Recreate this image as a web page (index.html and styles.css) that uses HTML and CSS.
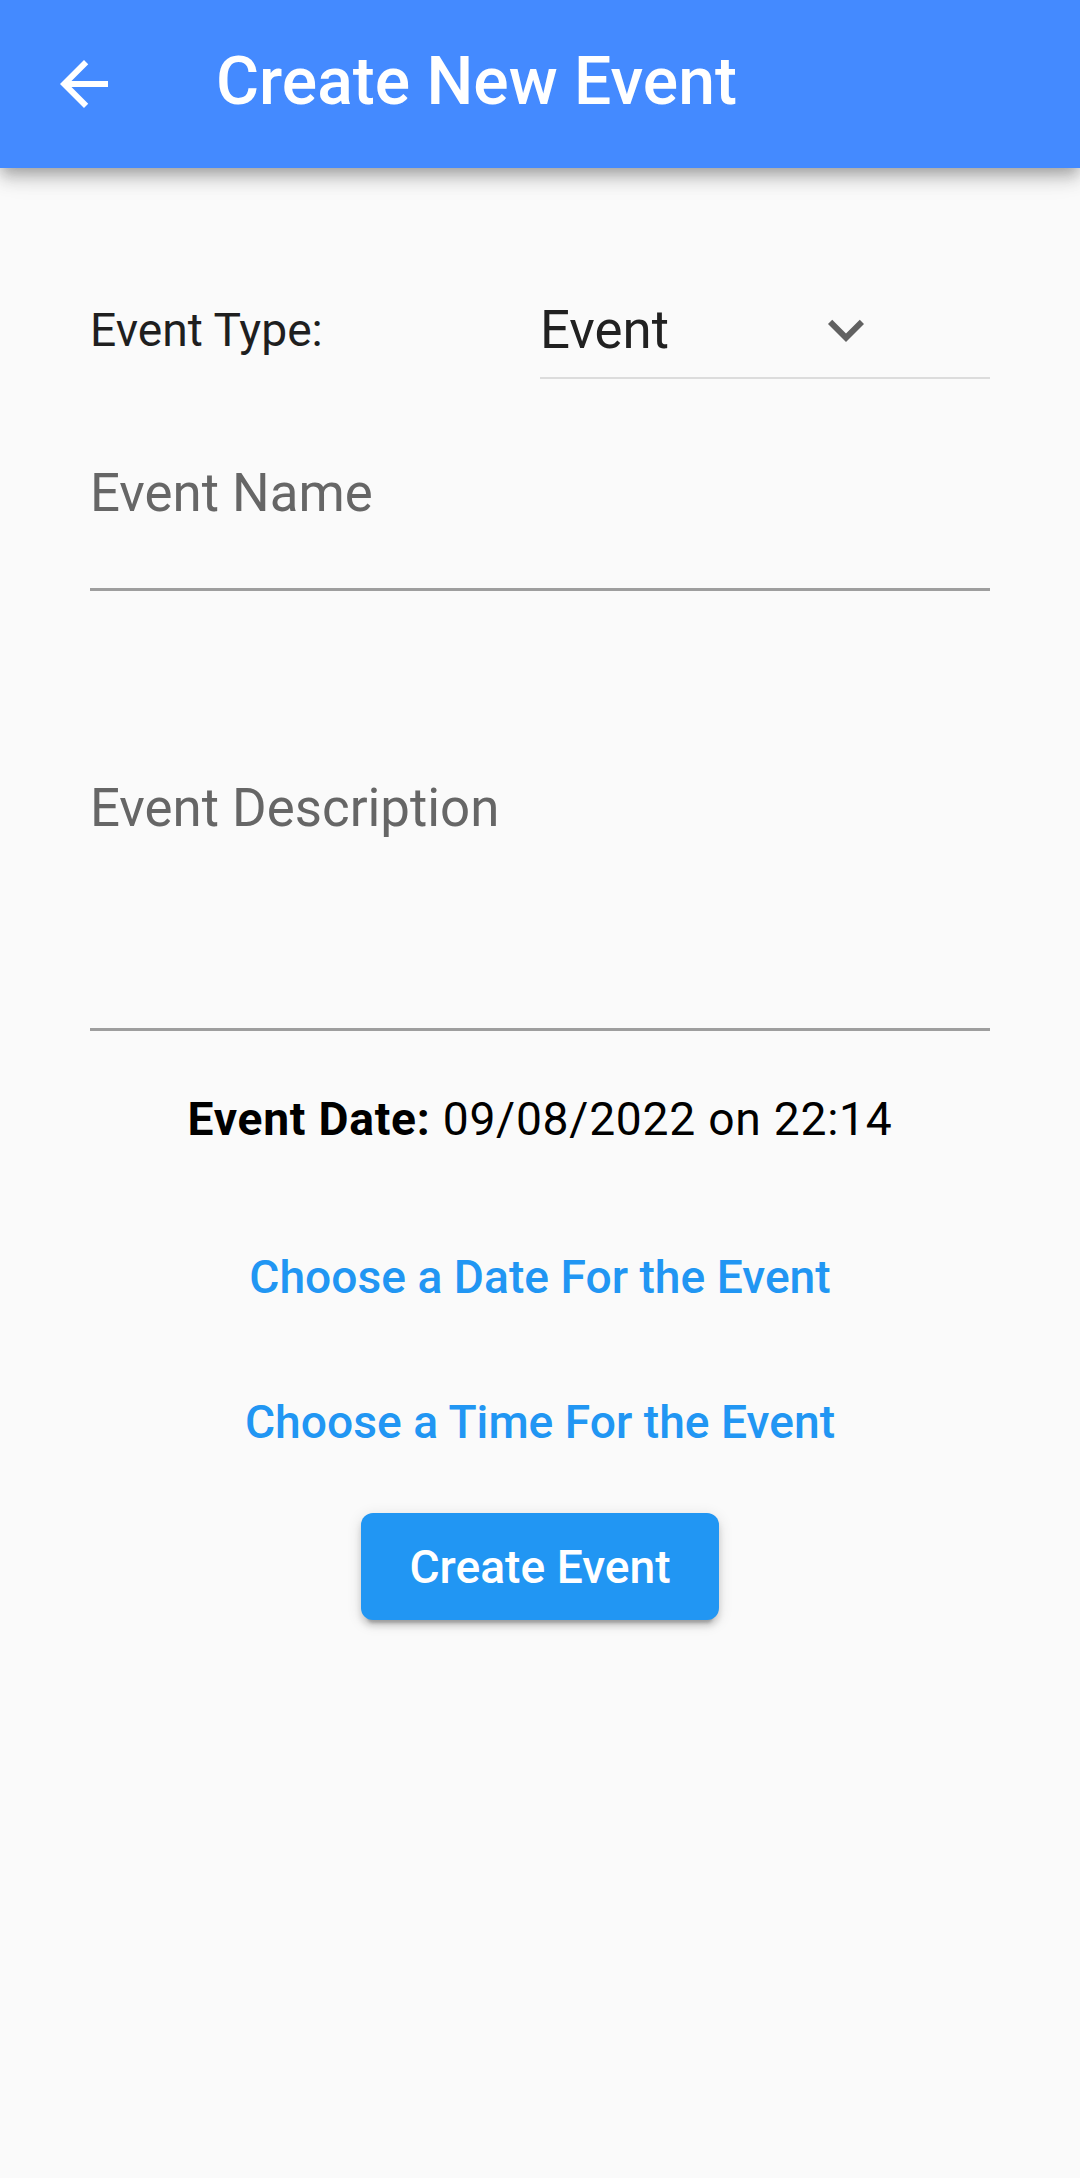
FILE: index.html
```html
<!DOCTYPE html>
<html lang="en">
<head>
<meta charset="utf-8">
<title>Create New Event</title>
<link rel="stylesheet" href="styles.css">
</head>
<body>
<header class="appbar">
  <button class="back" aria-label="Back">
    <svg viewBox="0 0 24 24" width="72" height="72"><path fill="#fff" d="M20 11H7.830l5.59-5.59L12 4l-8 8 8 8 1.41-1.410L7.83 13H20v-2z"/></svg>
  </button>
  <h1 class="title">Create New Event</h1>
</header>
<main class="form">
  <div class="type-row">
    <span class="type-label">Event Type:</span>
    <div class="dropdown">
      <span class="dd-value">Event</span>
      <svg class="dd-icon" viewBox="0 0 24 24" width="72" height="72"><path fill="#616161" d="M16.59 8.59L12 13.17 7.41 8.59 6 10l6 6 6-6z"/></svg>
    </div>
  </div>
  <div class="field field-name"><span class="hint">Event Name</span></div>
  <div class="field field-desc"><span class="hint">Event Description</span></div>
  <p class="date-line"><b>Event Date:</b> 09/08/2022 on 22:14</p>
  <button class="text-btn text-btn-date">Choose a Date For the Event</button>
  <button class="text-btn text-btn-time">Choose a Time For the Event</button>
  <button class="raised-btn">Create Event</button>
</main>
</body>
</html>
```

FILE: styles.css
```css
* { box-sizing: border-box; }
html, body {
  margin: 0;
  padding: 0;
  background: #fafafa;
  font-family: Roboto, "Noto Sans", "Liberation Sans", sans-serif;
}
body { min-height: 2178px; }

.appbar {
  height: 168px;
  background: #448aff;
  display: flex;
  align-items: center;
  box-shadow: 0 6px 12px -3px rgba(0,0,0,.2), 0 12px 15px 0 rgba(0,0,0,.14), 0 3px 30px 0 rgba(0,0,0,.12);
  position: relative;
  z-index: 1;
}
.back {
  margin-left: 48px;
  width: 72px;
  height: 72px;
  padding: 0;
  border: none;
  background: none;
  display: block;
}
.back svg { display: block; }
.title {
  margin: 0 0 0 96px;
  font-size: 66px;
  font-weight: 500;
  color: #fff;
  line-height: 72px;
  position: relative;
  top: -2px;
}

.form {
  display: flex;
  flex-direction: column;
  padding: 126px 90px 0;
}

.type-row {
  display: flex;
  align-items: flex-start;
}
.type-label {
  flex: 1;
  font-size: 46.2px;
  line-height: 72px;
  color: #1f1f1f;
}
.dropdown {
  flex: 1;
  display: flex;
  align-items: center;
  padding-bottom: 11px;
  border-bottom: 2px solid #dcdcdc;
}
.dd-value {
  width: 270px;
  font-size: 52.8px;
  line-height: 72px;
  color: #212121;
}
.dd-icon { display: block; }

.field {
  border-bottom: 3px solid #9e9e9e;
}
.hint {
  display: block;
  font-size: 52.8px;
  line-height: 72px;
  color: #666;
}
.field-name {
  margin-top: 78px;
  padding-bottom: 59px;
}
.field-desc {
  margin-top: 181px;
  padding-bottom: 184px;
}

.date-line {
  margin: 52px 0 0;
  text-align: center;
  font-size: 46.2px;
  line-height: 72px;
  letter-spacing: 0.75px;
  color: #000;
}
.date-line b { font-weight: 700; }

.text-btn {
  align-self: center;
  height: 144px;
  padding: 0 24px;
  border: none;
  background: none;
  font-family: inherit;
  font-size: 46.2px;
  font-weight: 500;
  color: #2196f3;
}
.text-btn-date { margin-top: 50px; }
.text-btn-time { margin-top: 1px; }

.raised-btn {
  align-self: center;
  margin-top: 19px;
  height: 107px;
  padding: 0 48px;
  border: none;
  border-radius: 12px;
  background: #2196f3;
  color: #fff;
  font-family: inherit;
  font-size: 46.2px;
  font-weight: 500;
  box-shadow: 0 9px 3px -6px rgba(0,0,0,.2), 0 6px 6px 0 rgba(0,0,0,.14), 0 3px 15px 0 rgba(0,0,0,.12);
}
```
